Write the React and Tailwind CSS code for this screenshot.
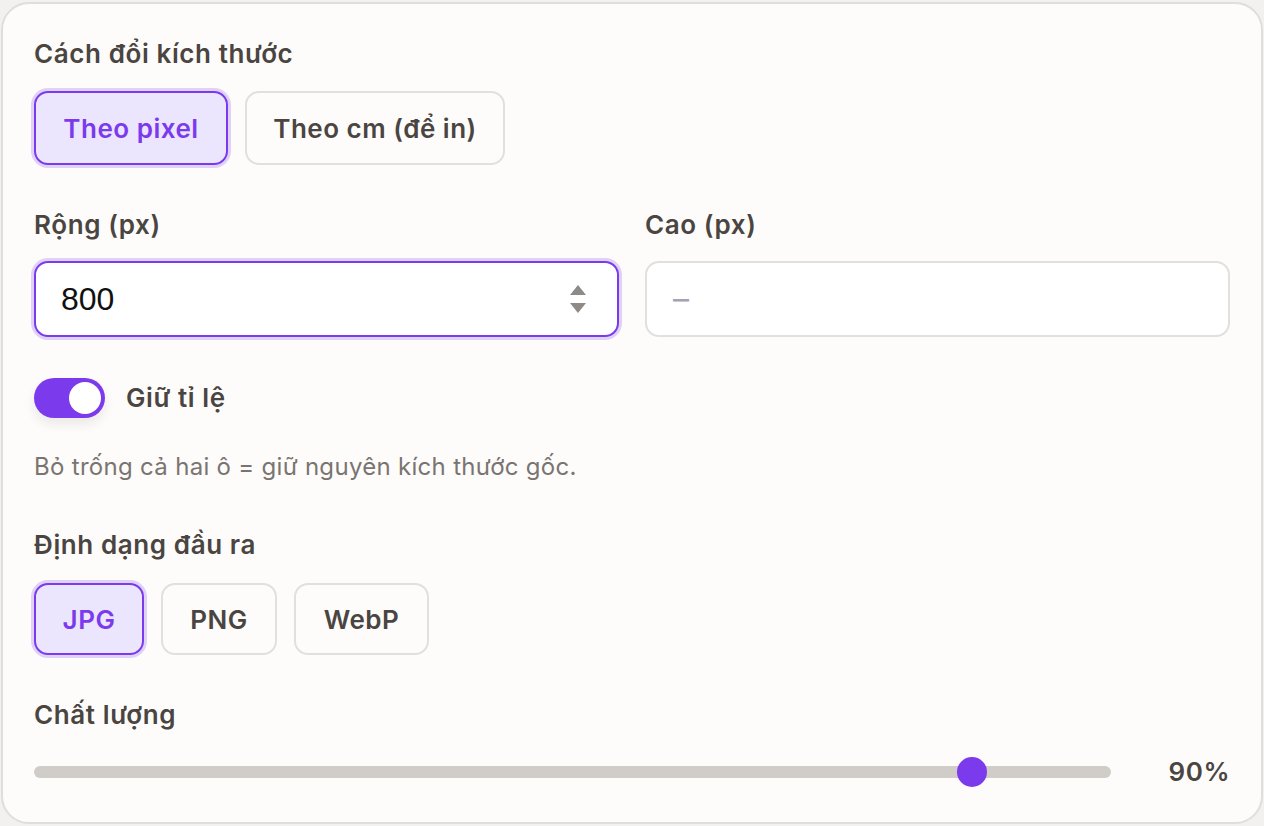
import React from "react";

const font = { fontFamily: "Inter, 'Noto Sans', sans-serif" };

function Choice({ active, children, className = "" }) {
  return (
    <div
      className={
        "flex items-center justify-center rounded-[14px] border-2 text-[26px] font-semibold tracking-[0.5px] " +
        (active
          ? "border-[#7c3aed] bg-[#ebe5fd] text-[#7c3aed] shadow-[0_0_0_3px_rgba(124,58,237,0.22)] "
          : "border-[#e2dfdc] bg-[#fdfcfb] text-[#4a4541] ") +
        className
      }
    >
      {children}
    </div>
  );
}

const label = "text-[26px] font-semibold leading-[32px] tracking-[0.6px]";

export default function App() {
  return (
    <div className="min-h-[826px] bg-[#f2f1ef] pt-[2px] px-[1px]" style={font}>
      <div className="rounded-[28px] border-2 border-[#e0ddda] bg-[#fdfcfb] pl-[31px] pr-[31px] pt-[34px] pb-[34px] text-[#4a4541]">
        <div className={label}>Cách đổi kích thước</div>
        <div className="mt-[21px] flex gap-[17px]">
          <Choice active className="h-[74px] w-[194px]">Theo pixel</Choice>
          <Choice className="h-[74px] w-[260px]">Theo cm (để in)</Choice>
        </div>

        <div className="mt-[44px] grid grid-cols-2 gap-[26px]">
          <div>
            <div className={label}>Rộng (px)</div>
            <div className="mt-[20px] flex h-[76px] items-center justify-between rounded-[14px] border-2 border-[#7c3aed] bg-white pl-[25px] pr-[30px] shadow-[0_0_0_3px_rgba(124,58,237,0.22)]">
              <span className="text-[32px] leading-none text-[#111111]" style={{ fontFamily: "'Liberation Sans', Arial, sans-serif" }}>800</span>
              <svg width="18" height="34" viewBox="0 0 18 34">
                <polygon points="9,3 17,13 1,13" fill="#8d8a88" />
                <polygon points="1,21 17,21 9,31" fill="#8d8a88" />
              </svg>
            </div>
          </div>
          <div>
            <div className={label}>Cao (px)</div>
            <div className="mt-[20px] flex h-[76px] items-center rounded-[14px] border-2 border-[#e2dfdc] bg-white pl-[26px]">
              <span className="text-[32px] leading-none text-[#a5a2b6]">–</span>
            </div>
          </div>
        </div>

        <div className="mt-[41px] flex items-center gap-[21px]">
          <div className="flex h-[40px] w-[71px] items-center justify-end rounded-full bg-[#7c3aed] pr-[4px] shadow-[0_6px_12px_rgba(0,0,0,0.08)]">
            <div className="h-[32px] w-[32px] rounded-full bg-white" />
          </div>
          <div className={label}>Giữ tỉ lệ</div>
        </div>

        <div className="mt-[34px] text-[24px] leading-[30px] tracking-[0.3px] text-[#7a7470]">
          Bỏ trống cả hai ô = giữ nguyên kích thước gốc.
        </div>

        <div className={"mt-[47px] " + label}>Định dạng đầu ra</div>
        <div className="mt-[22px] flex gap-[17px]">
          <Choice active className="h-[72px] w-[110px]">JPG</Choice>
          <Choice className="h-[72px] w-[116px]">PNG</Choice>
          <Choice className="h-[72px] w-[135px]">WebP</Choice>
        </div>

        <div className={"mt-[44px] " + label}>Chất lượng</div>
        <div className="mt-[25px] flex h-[32px] items-center">
          <div className="relative h-[12px] flex-1 rounded-full bg-[#d0ccc7]">
            <div className="absolute left-[923px] top-1/2 h-[30px] w-[30px] -translate-y-1/2 rounded-full bg-[#7c3aed]" />
          </div>
          <div className="w-[119px] text-right text-[26px] font-semibold leading-[32px] tracking-[0.5px]">90%</div>
        </div>
      </div>
    </div>
  );
}
